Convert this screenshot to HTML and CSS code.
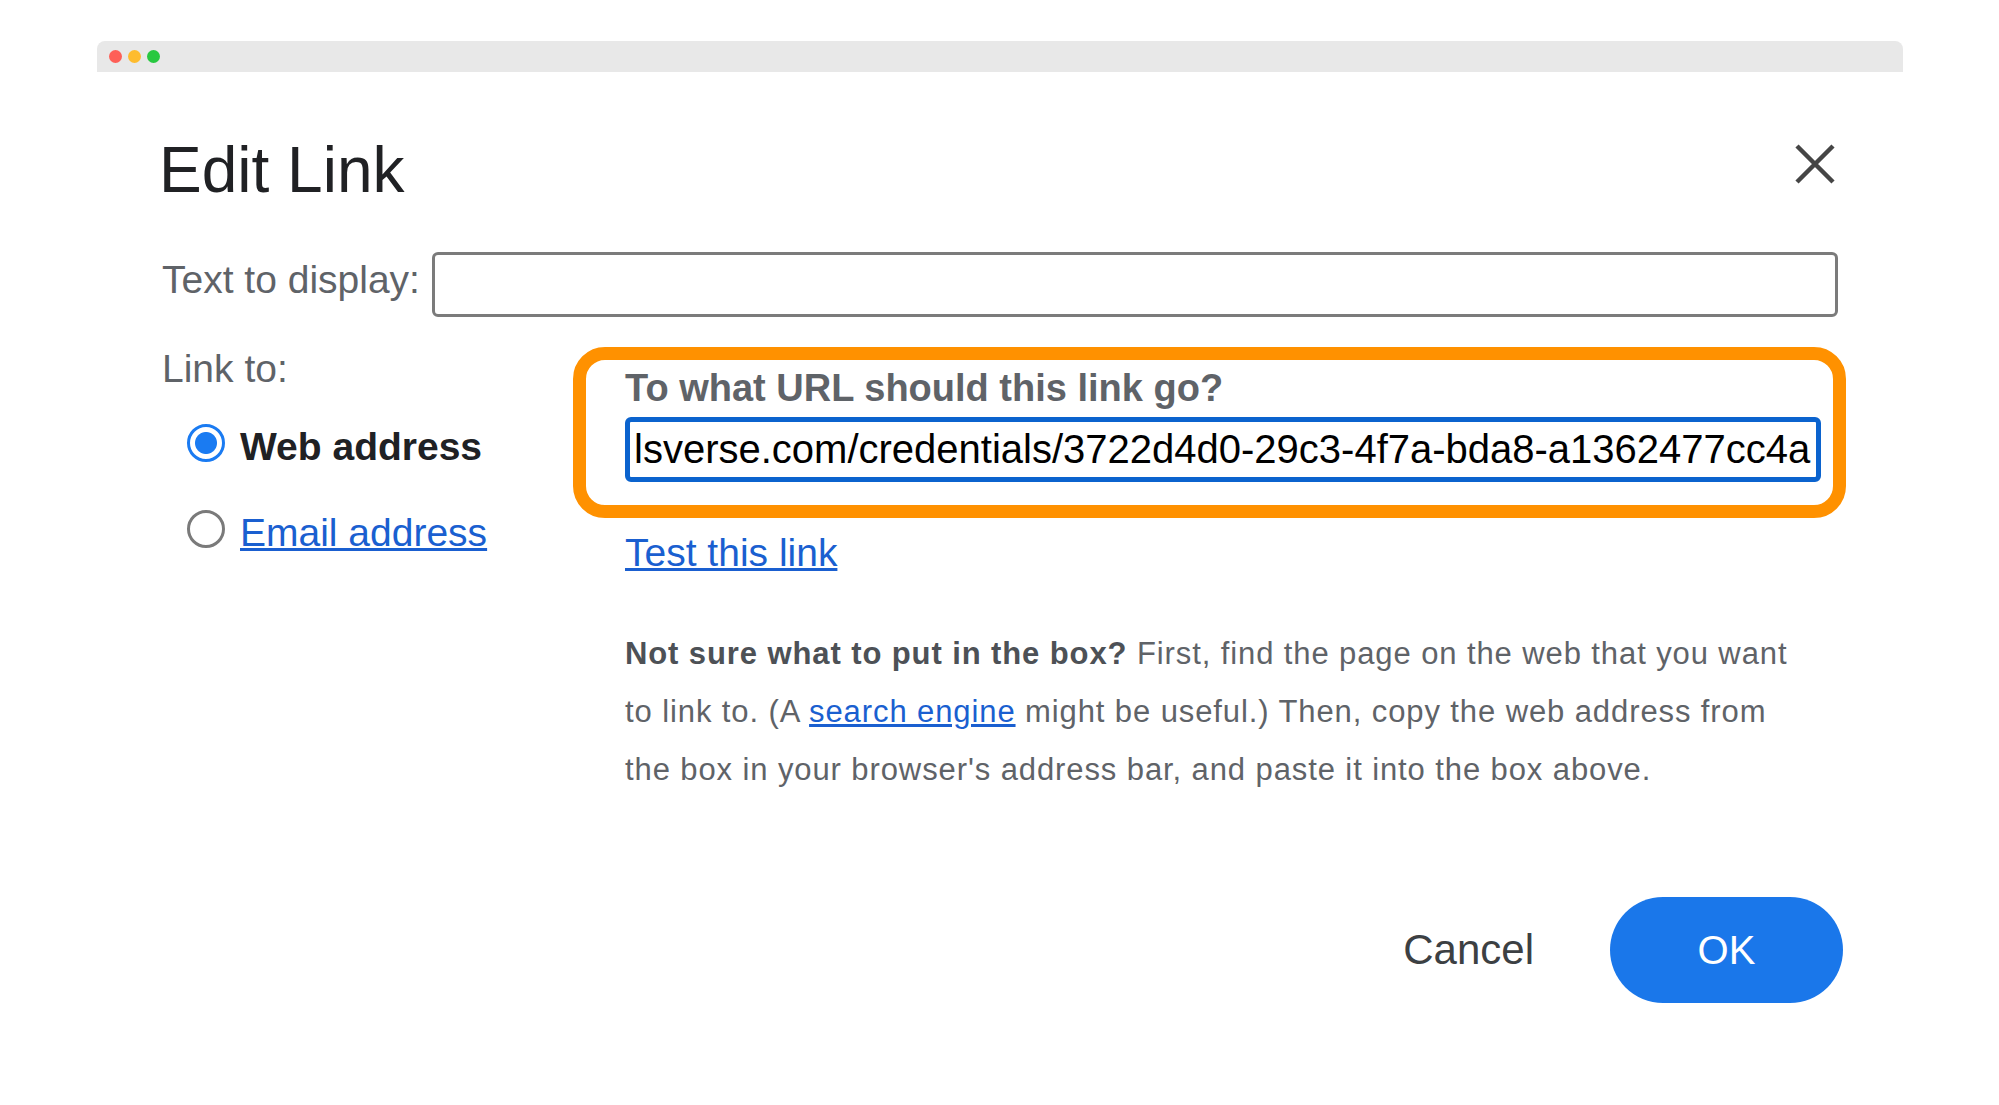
FILE: index.html
```html
<!DOCTYPE html>
<html lang="en">
<head>
  <meta charset="UTF-8">
  <title>Edit Link</title>
  <link rel="stylesheet" href="styles.css">
</head>
<body>
  <div class="window">
    <div class="titlebar">
      <span class="dot red"></span>
      <span class="dot yellow"></span>
      <span class="dot green"></span>
    </div>

    <div class="dialog">
      <div class="dialog-head">
        <h1>Edit Link</h1>
        <button class="close" aria-label="Close">
          <svg width="42" height="42" viewBox="0 0 42 42">
            <path d="M3 3 L39 39 M39 3 L3 39" stroke="#454545" stroke-width="4.5" fill="none"/>
          </svg>
        </button>
      </div>

      <div class="display-row">
        <label for="display">Text to display:</label>
        <input type="text" id="display">
      </div>

      <div class="link-section">
        <div class="link-types">
          <div class="link-to">Link to:</div>
          <label class="option">
            <span class="radio checked"></span>
            <span class="option-web">Web address</span>
          </label>
          <label class="option">
            <span class="radio"></span>
            <a href="#">Email address</a>
          </label>
        </div>

        <div class="link-detail">
          <div class="url-box">
            <div class="url-question">To what URL should this link go?</div>
            <input type="text" class="url-input" value="lsverse.com/credentials/3722d4d0-29c3-4f7a-bda8-a1362477cc4a">
          </div>
          <div class="test-row"><a href="#">Test this link</a></div>
          <p class="help">
            <b>Not sure what to put in the box?</b> First, find the page on the web that you want<br>
            to link to. (A <a href="#">search engine</a> might be useful.) Then, copy the web address from<br>
            the box in your browser's address bar, and paste it into the box above.
          </p>
        </div>
      </div>

      <div class="actions">
        <button class="cancel">Cancel</button>
        <button class="ok">OK</button>
      </div>
    </div>
  </div>
</body>
</html>
```

FILE: styles.css
```css
* { box-sizing: border-box; }
body {
  margin: 0;
  background: #fff;
  font-family: "Liberation Sans", Arial, sans-serif;
}
.window {
  margin: 41px 0 0 97px;
  width: 1806px;
}
.titlebar {
  height: 31px;
  background: #e8e8e8;
  border-radius: 8px 8px 0 0;
  display: flex;
  align-items: center;
  gap: 6px;
  padding-left: 12px;
}
.dot {
  width: 13px;
  height: 13px;
  border-radius: 50%;
}
.red { background: #fe5f57; }
.yellow { background: #febc2e; }
.green { background: #28c840; }

.dialog { padding: 60px 65px 0 65px; }

.dialog-head {
  display: flex;
  justify-content: space-between;
  align-items: flex-start;
}
h1 {
  margin: 0 0 0 -3px;
  font-size: 64px;
  line-height: 76px;
  font-weight: normal;
  color: #202124;
}
.close {
  border: none;
  background: none;
  padding: 0;
  margin-top: 11px;
  margin-right: 2px;
  width: 42px;
  height: 42px;
  cursor: pointer;
}
.close svg { display: block; }

.display-row {
  display: flex;
  align-items: center;
  margin-top: 44px;
}
.display-row label {
  font-size: 39px;
  line-height: 48px;
  color: #5f6368;
  margin-bottom: 10px;
  margin-right: 12px;
}
.display-row input {
  flex: 1;
  height: 65px;
  border: 3px solid #7b7b7b;
  border-radius: 6px;
  outline: none;
}

.link-section {
  display: grid;
  grid-template-columns: 463px 1fr;
  margin-top: 30px;
}
.link-to {
  font-size: 39px;
  line-height: 44px;
  color: #5f6368;
}
.option {
  display: flex;
  align-items: center;
  gap: 15px;
  padding-left: 25px;
  height: 48px;
  margin-top: 28px;
  font-size: 39px;
}
.option + .option { margin-top: 38px; }
.option-web, .option a { padding-top: 8px; }
.radio {
  width: 38px;
  height: 38px;
  border-radius: 50%;
  border: 3px solid #7a7a7a;
  flex: none;
}
.radio.checked {
  border-color: #1a7bf2;
  background: radial-gradient(circle, #1a7bf2 0 10.5px, #fff 11.5px);
}
.option-web {
  font-weight: bold;
  color: #202124;
}
a { color: #1a5fd0; }

.url-box {
  margin: 0 -8px 0 -52px;
  border: 13px solid #ff9100;
  border-radius: 32px;
  padding: 5px 12px 23px 39px;
}
.url-question {
  font-size: 38px;
  line-height: 46px;
  font-weight: bold;
  color: #5f6368;
}
.url-input {
  display: block;
  width: 100%;
  height: 65px;
  margin-top: 6px;
  border: 5px solid #0b63ce;
  border-radius: 6px;
  padding: 0 4px;
  font-family: "Liberation Sans", Arial, sans-serif;
  font-size: 40px;
  color: #000;
  outline: none;
}
.test-row {
  margin-top: 11px;
  font-size: 39px;
  line-height: 48px;
}
.help {
  margin: 48px 0 0 0;
  font-size: 31px;
  letter-spacing: 0.9px;
  line-height: 58px;
  color: #5f6368;
}
.help b { color: #4d5156; }

.actions {
  display: flex;
  justify-content: flex-end;
  align-items: center;
  gap: 76px;
  margin: 98px -5px 0 0;
}
.actions button {
  border: none;
  background: none;
  font-family: inherit;
  cursor: pointer;
  padding: 0;
}
.cancel {
  font-size: 42px;
  color: #3c4043;
}
.ok {
  width: 233px;
  height: 106px;
  border-radius: 53px;
  font-size: 40px;
  color: #fff;
  background: #1a77ea !important;
}
```
